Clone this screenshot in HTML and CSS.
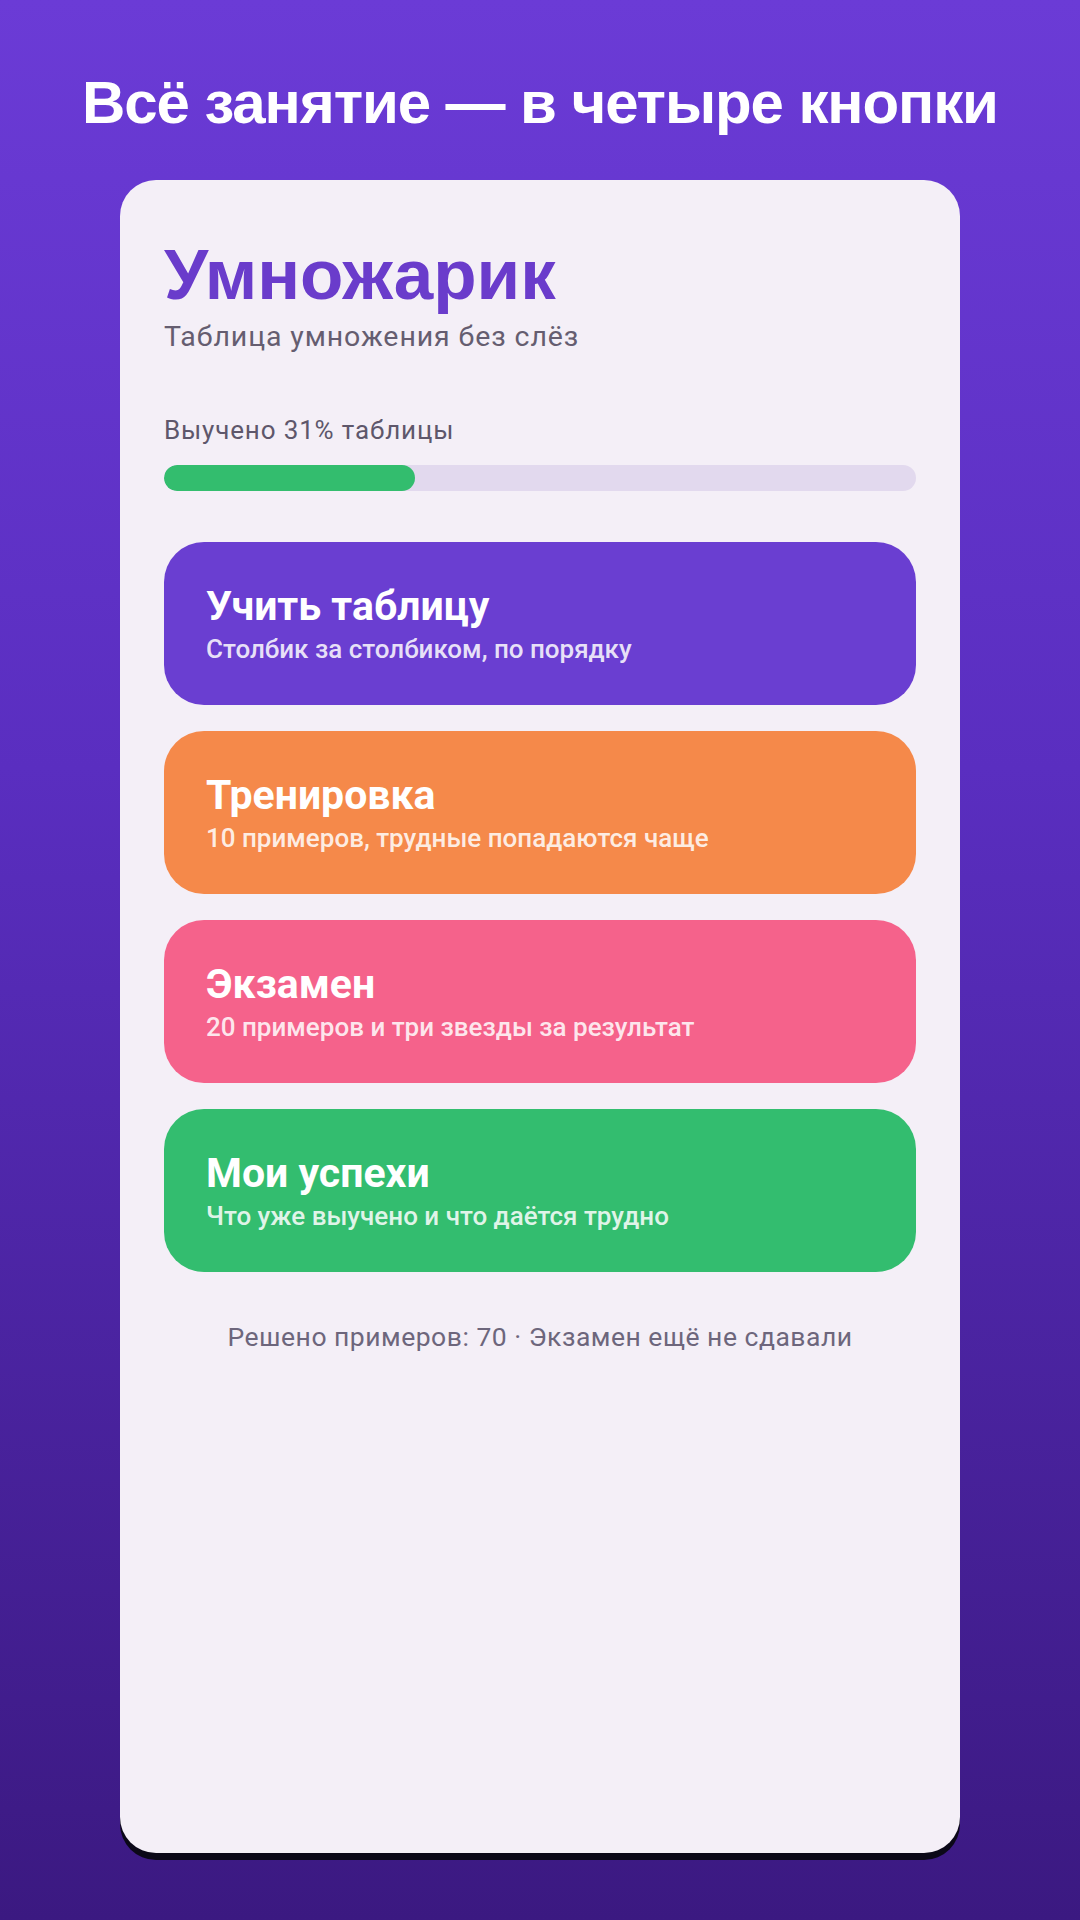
FILE: index.html
```html
<!DOCTYPE html>
<html lang="ru">
<head>
<meta charset="utf-8">
<title>Умножарик</title>
<link rel="stylesheet" href="styles.css">
</head>
<body>
<h1 class="headline">Всё занятие — в четыре кнопки</h1>
<main class="card">
  <h2 class="app-title">Умножарик</h2>
  <p class="app-sub">Таблица умножения без слёз</p>
  <p class="progress-label">Выучено 31% таблицы</p>
  <div class="bar"><div class="bar-fill" style="width:33.4%"></div></div>
  <nav class="menu">
    <a class="btn btn-purple"><span class="btn-title">Учить таблицу</span><span class="btn-sub">Столбик за столбиком, по порядку</span></a>
    <a class="btn btn-orange"><span class="btn-title">Тренировка</span><span class="btn-sub">10 примеров, трудные попадаются чаще</span></a>
    <a class="btn btn-pink"><span class="btn-title">Экзамен</span><span class="btn-sub">20 примеров и три звезды за результат</span></a>
    <a class="btn btn-green"><span class="btn-title">Мои успехи</span><span class="btn-sub">Что уже выучено и что даётся трудно</span></a>
  </nav>
  <p class="stats">Решено примеров: 70 · Экзамен ещё не сдавали</p>
</main>
</body>
</html>
```
FILE: styles.css
```css
html, body {
  margin: 0;
  padding: 0;
}
body {
  width: 1080px;
  height: 1920px;
  overflow: hidden;
  background: linear-gradient(180deg, #6b3bd6 0%, #5a2ec0 40%, #3b1981 100%);
  font-family: Roboto, "Noto Sans", sans-serif;
  display: flex;
  flex-direction: column;
  align-items: center;
}
.headline {
  margin: 0;
  padding-top: 67px;
  font-family: "Liberation Sans", Arial, sans-serif;
  font-weight: 700;
  font-size: 60px;
  line-height: 72px;
  letter-spacing: -1.1px;
  color: #ffffff;
  text-align: center;
}
.card {
  box-sizing: border-box;
  width: 840px;
  height: 1673px;
  margin-top: 41px;
  padding: 54px 44px 0;
  background: #f4eff7;
  border-radius: 36px;
  box-shadow: 0 7px 0 #0b0818;
  display: flex;
  flex-direction: column;
}
.app-title {
  margin: 0;
  font-family: "Liberation Sans", Arial, sans-serif;
  font-size: 71px;
  line-height: 82px;
  font-weight: 700;
  color: #6a3ccb;
}
.app-sub {
  margin: 4px 0 0;
  font-size: 28.5px;
  line-height: 34px;
  letter-spacing: 0.9px;
  color: #655d70;
}
.progress-label {
  margin: 60px 0 0;
  font-size: 26px;
  line-height: 32px;
  letter-spacing: 0.85px;
  color: #5e576b;
}
.bar {
  margin-top: 19px;
  height: 26px;
  border-radius: 13px;
  background: #e2d9ee;
  overflow: hidden;
}
.bar-fill {
  height: 100%;
  border-radius: 13px;
  background: #33bd6e;
}
.menu {
  margin-top: 51px;
  display: flex;
  flex-direction: column;
  gap: 26px;
}
.btn {
  box-sizing: border-box;
  height: 163px;
  padding: 0 42px;
  border-radius: 40px;
  display: flex;
  flex-direction: column;
  justify-content: center;
  color: #ffffff;
}
.btn-title {
  font-size: 41px;
  line-height: 48px;
  font-weight: 700;
}
.btn-sub {
  margin-top: 3px;
  font-size: 26px;
  line-height: 32px;
  font-weight: 500;
  color: rgba(255, 255, 255, 0.86);
}
.btn-purple { background: #6a3ed1; }
.btn-orange { background: #f5894a; }
.btn-pink { background: #f5628b; }
.btn-green { background: #33bd6f; }
.stats {
  margin: 49px 0 0;
  font-size: 26.5px;
  line-height: 32px;
  letter-spacing: 0.5px;
  text-align: center;
  color: #6d667c;
}
```
